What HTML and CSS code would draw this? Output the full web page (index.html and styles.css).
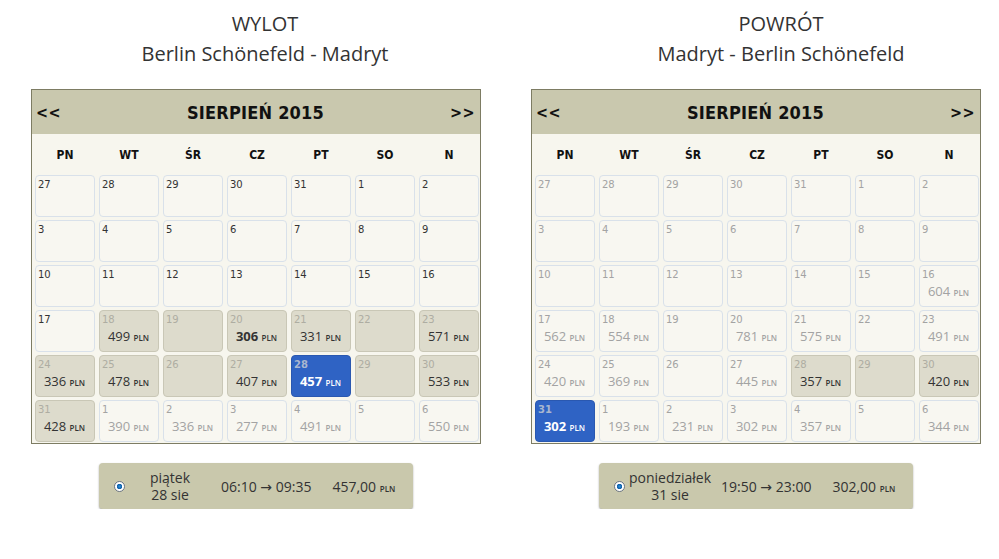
FILE: index.html
```html
<!DOCTYPE html>
<html lang="pl">
<head>
    <meta charset="UTF-8">
    <meta name="viewport" content="width=device-width, initial-scale=1.0">
    <title>Wybór lotu</title>
    <link rel="stylesheet" href="styles.css">
</head>
<body>
    <div class="trip">
        <!-- WYLOT -->
        <div class="leg leg-out">
            <h2 class="leg-title">WYLOT<br>Berlin Schönefeld - Madryt</h2>
            <div class="calendar">
                <div class="cal-head">
                    <span class="nav">&lt;&lt;</span>
                    <span class="month">SIERPIEŃ 2015</span>
                    <span class="nav">&gt;&gt;</span>
                </div>
                <div class="weekdays">
                    <span>PN</span><span>WT</span><span>ŚR</span><span>CZ</span><span>PT</span><span>SO</span><span>N</span>
                </div>
                <div class="days">
                    <div class="day"><b>27</b></div>
                    <div class="day"><b>28</b></div>
                    <div class="day"><b>29</b></div>
                    <div class="day"><b>30</b></div>
                    <div class="day"><b>31</b></div>
                    <div class="day"><b>1</b></div>
                    <div class="day"><b>2</b></div>

                    <div class="day"><b>3</b></div>
                    <div class="day"><b>4</b></div>
                    <div class="day"><b>5</b></div>
                    <div class="day"><b>6</b></div>
                    <div class="day"><b>7</b></div>
                    <div class="day"><b>8</b></div>
                    <div class="day"><b>9</b></div>

                    <div class="day"><b>10</b></div>
                    <div class="day"><b>11</b></div>
                    <div class="day"><b>12</b></div>
                    <div class="day"><b>13</b></div>
                    <div class="day"><b>14</b></div>
                    <div class="day"><b>15</b></div>
                    <div class="day"><b>16</b></div>

                    <div class="day"><b>17</b></div>
                    <div class="day fare"><b>18</b><span class="price">499 <small>PLN</small></span></div>
                    <div class="day fare"><b>19</b></div>
                    <div class="day fare"><b>20</b><span class="price best">306 <small>PLN</small></span></div>
                    <div class="day fare"><b>21</b><span class="price">331 <small>PLN</small></span></div>
                    <div class="day fare"><b>22</b></div>
                    <div class="day fare"><b>23</b><span class="price">571 <small>PLN</small></span></div>

                    <div class="day fare"><b>24</b><span class="price">336 <small>PLN</small></span></div>
                    <div class="day fare"><b>25</b><span class="price">478 <small>PLN</small></span></div>
                    <div class="day fare"><b>26</b></div>
                    <div class="day fare"><b>27</b><span class="price">407 <small>PLN</small></span></div>
                    <div class="day picked"><b>28</b><span class="price">457 <small>PLN</small></span></div>
                    <div class="day fare"><b>29</b></div>
                    <div class="day fare"><b>30</b><span class="price">533 <small>PLN</small></span></div>

                    <div class="day fare"><b>31</b><span class="price">428 <small>PLN</small></span></div>
                    <div class="day muted"><b>1</b><span class="price">390 <small>PLN</small></span></div>
                    <div class="day muted"><b>2</b><span class="price">336 <small>PLN</small></span></div>
                    <div class="day muted"><b>3</b><span class="price">277 <small>PLN</small></span></div>
                    <div class="day muted"><b>4</b><span class="price">491 <small>PLN</small></span></div>
                    <div class="day muted"><b>5</b></div>
                    <div class="day muted"><b>6</b><span class="price">550 <small>PLN</small></span></div>
                </div>
            </div>
            <label class="flight">
                <span class="radio"></span>
                <span class="flight-date">piątek<br>28 sie</span>
                <span class="flight-time">06:10 <i>→</i> 09:35</span>
                <span class="flight-price">457,00 <small>PLN</small></span>
            </label>
        </div>

        <!-- POWRÓT -->
        <div class="leg leg-back">
            <h2 class="leg-title">POWRÓT<br>Madryt - Berlin Schönefeld</h2>
            <div class="calendar">
                <div class="cal-head">
                    <span class="nav">&lt;&lt;</span>
                    <span class="month">SIERPIEŃ 2015</span>
                    <span class="nav">&gt;&gt;</span>
                </div>
                <div class="weekdays">
                    <span>PN</span><span>WT</span><span>ŚR</span><span>CZ</span><span>PT</span><span>SO</span><span>N</span>
                </div>
                <div class="days">
                    <div class="day muted"><b>27</b></div>
                    <div class="day muted"><b>28</b></div>
                    <div class="day muted"><b>29</b></div>
                    <div class="day muted"><b>30</b></div>
                    <div class="day muted"><b>31</b></div>
                    <div class="day muted"><b>1</b></div>
                    <div class="day muted"><b>2</b></div>

                    <div class="day muted"><b>3</b></div>
                    <div class="day muted"><b>4</b></div>
                    <div class="day muted"><b>5</b></div>
                    <div class="day muted"><b>6</b></div>
                    <div class="day muted"><b>7</b></div>
                    <div class="day muted"><b>8</b></div>
                    <div class="day muted"><b>9</b></div>

                    <div class="day muted"><b>10</b></div>
                    <div class="day muted"><b>11</b></div>
                    <div class="day muted"><b>12</b></div>
                    <div class="day muted"><b>13</b></div>
                    <div class="day muted"><b>14</b></div>
                    <div class="day muted"><b>15</b></div>
                    <div class="day muted"><b>16</b><span class="price">604 <small>PLN</small></span></div>

                    <div class="day muted"><b>17</b><span class="price">562 <small>PLN</small></span></div>
                    <div class="day muted"><b>18</b><span class="price">554 <small>PLN</small></span></div>
                    <div class="day muted"><b>19</b></div>
                    <div class="day muted"><b>20</b><span class="price">781 <small>PLN</small></span></div>
                    <div class="day muted"><b>21</b><span class="price">575 <small>PLN</small></span></div>
                    <div class="day muted"><b>22</b></div>
                    <div class="day muted"><b>23</b><span class="price">491 <small>PLN</small></span></div>

                    <div class="day muted"><b>24</b><span class="price">420 <small>PLN</small></span></div>
                    <div class="day muted"><b>25</b><span class="price">369 <small>PLN</small></span></div>
                    <div class="day muted"><b>26</b></div>
                    <div class="day muted"><b>27</b><span class="price">445 <small>PLN</small></span></div>
                    <div class="day fare"><b>28</b><span class="price">357 <small>PLN</small></span></div>
                    <div class="day fare"><b>29</b></div>
                    <div class="day fare"><b>30</b><span class="price">420 <small>PLN</small></span></div>

                    <div class="day picked"><b>31</b><span class="price">302 <small>PLN</small></span></div>
                    <div class="day muted"><b>1</b><span class="price">193 <small>PLN</small></span></div>
                    <div class="day muted"><b>2</b><span class="price">231 <small>PLN</small></span></div>
                    <div class="day muted"><b>3</b><span class="price">302 <small>PLN</small></span></div>
                    <div class="day muted"><b>4</b><span class="price">357 <small>PLN</small></span></div>
                    <div class="day muted"><b>5</b></div>
                    <div class="day muted"><b>6</b><span class="price">344 <small>PLN</small></span></div>
                </div>
            </div>
            <label class="flight">
                <span class="radio"></span>
                <span class="flight-date">poniedziałek<br>31 sie</span>
                <span class="flight-time">19:50 <i>→</i> 23:00</span>
                <span class="flight-price">302,00 <small>PLN</small></span>
            </label>
        </div>
    </div>
</body>
</html>
```

FILE: styles.css
```css
body {
    margin: 0;
    background-color: #fff;
    color: #333;
    font-family: "Open Sans", sans-serif;
}

.trip {
    display: flex;
    gap: 50px;
    padding-left: 31px;
}

.leg {
    width: 450px;
    display: flex;
    flex-direction: column;
    align-items: center;
}

.leg-title {
    margin: 9px 0 20px;
    font-size: 20px;
    font-weight: normal;
    line-height: 30px;
    text-align: center;
    color: #333;
    white-space: nowrap;
}

.leg-out .leg-title {
    padding-left: 18px;
}

.leg-back .leg-title {
    padding-left: 50px;
}

/* calendar box */
.calendar {
    width: 448px;
    border: 1px solid #7d7c63;
    background-color: #f7f6ee;
}

.cal-head {
    height: 44px;
    display: flex;
    align-items: center;
    justify-content: space-between;
    padding: 0 5px 0 4px;
    background-color: #c9c8ae;
    font-family: "DejaVu Sans Condensed", "DejaVu Sans", sans-serif;
    font-stretch: condensed;
    font-weight: bold;
    color: #111;
}

.cal-head .month {
    font-size: 18px;
    letter-spacing: 0.2px;
}

.cal-head .nav {
    font-size: 16px;
    letter-spacing: 0.5px;
    cursor: pointer;
}

.weekdays {
    height: 41px;
    display: grid;
    grid-template-columns: repeat(7, 60px);
    column-gap: 4px;
    padding-left: 3px;
    align-items: center;
    text-align: center;
    font-family: "DejaVu Sans Condensed", "DejaVu Sans", sans-serif;
    font-stretch: condensed;
    font-weight: bold;
    font-size: 12px;
    color: #111;
}

.days {
    display: grid;
    grid-template-columns: repeat(7, 60px);
    grid-auto-rows: 42px;
    gap: 3px 4px;
    padding: 0 0 1px 3px;
}

/* single day */
.day {
    box-sizing: border-box;
    display: flex;
    flex-direction: column;
    border: 1px solid #d9e1ea;
    border-radius: 4px;
    background-color: #f8f7f1;
    padding: 2px 0 0 2px;
}

.day b {
    font-family: "DejaVu Sans", sans-serif;
    font-weight: normal;
    font-size: 10px;
    line-height: 13px;
    color: #333;
}

.price {
    margin-top: 1px;
    padding-right: 3px;
    text-align: center;
    font-size: 13px;
    line-height: 18px;
    color: #333;
}

.price small,
.flight-price small {
    font-size: 8px;
    font-weight: 600;
}

.price.best {
    font-weight: bold;
}

.day.muted b,
.day.muted .price {
    color: #a3a3a3;
}

.day.fare {
    background-color: #dddbcc;
    border-color: #c9c7b6;
}

.day.fare b {
    color: #aeada2;
}

.day.picked {
    background-color: #2f63c4;
    border-color: #2a58b0;
}

.day.picked b {
    color: #a9b6cf;
    font-weight: bold;
}

.day.picked .price {
    color: #fff;
    font-weight: bold;
}

/* chosen flight */
.flight {
    box-sizing: border-box;
    width: 314px;
    height: 46px;
    margin-top: 19px;
    display: flex;
    align-items: center;
    padding-left: 15px;
    background-color: #c9c8ac;
    border-radius: 4px;
    box-shadow: 0 1px 2px rgba(0, 0, 0, 0.35);
    font-size: 14px;
    color: #333;
    cursor: pointer;
}

.radio {
    box-sizing: border-box;
    width: 11px;
    height: 11px;
    border-radius: 50%;
    border: 1px solid #6d7784;
    background: radial-gradient(circle, #2c8fd8 0, #0d5ea8 2.5px, #fff 3px);
    flex: none;
}

.flight-date {
    width: 80px;
    text-align: center;
    line-height: 17px;
    margin-left: 5px;
}

.leg-back .flight-date {
    width: 90px;
    margin-left: 0;
}

.flight-time {
    margin-left: 11px;
    white-space: nowrap;
}

.flight-time i {
    font-style: normal;
    font-family: "DejaVu Sans", sans-serif;
    font-size: 14px;
}

.leg-back .flight-time {
    margin-left: 6px;
}

.flight-price {
    margin-left: 21px;
}
```
